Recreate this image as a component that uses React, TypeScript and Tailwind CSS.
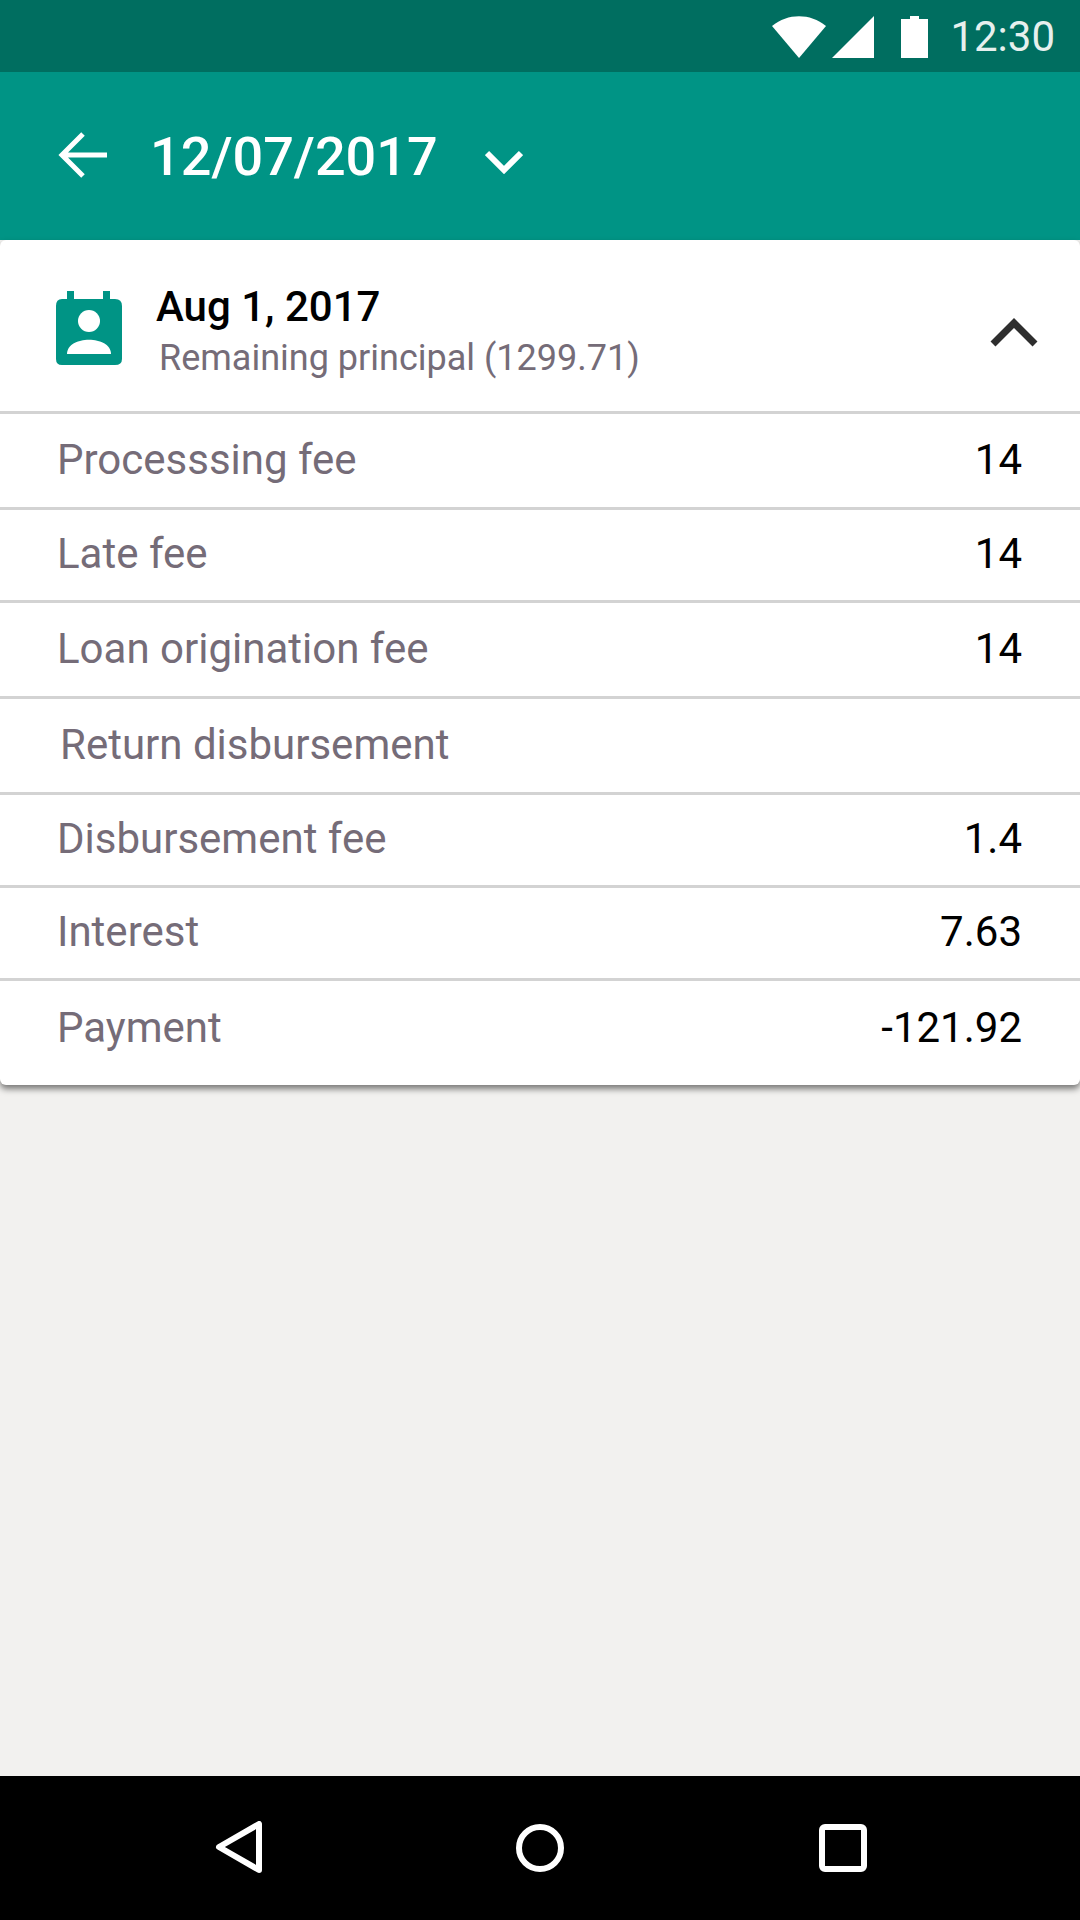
export default function App() {
  const rows: { label: string; value: string; h: string; pl: string }[] = [
    { label: "Processsing fee", value: "14", h: "h-[96px]", pl: "pl-[57px]" },
    { label: "Late fee", value: "14", h: "h-[93px]", pl: "pl-[57px]" },
    { label: "Loan origination fee", value: "14", h: "h-[96px]", pl: "pl-[57px]" },
    { label: "Return disbursement", value: "", h: "h-[96px]", pl: "pl-[60px]" },
    { label: "Disbursement fee", value: "1.4", h: "h-[93px]", pl: "pl-[57px]" },
    { label: "Interest", value: "7.63", h: "h-[93px]", pl: "pl-[57px]" },
  ];
  return (
    <div className="flex h-[1920px] w-[1080px] flex-col bg-[#f2f1ef] font-['Roboto',sans-serif]">
      <div className="flex h-[72px] items-center justify-end bg-[#006e60] pr-[25px]">
        <svg width="54" height="42" viewBox="0 0 54 42" className="mt-[1px]">
          <path d="M0 10 C16 -3 38 -3 54 10 L27 42 Z" fill="#fff" />
        </svg>
        <svg width="42" height="42" viewBox="0 0 42 42" className="ml-[6px] mt-[1px]">
          <path d="M0 42 L42 0 V42 Z" fill="#fff" />
        </svg>
        <svg width="27" height="42" viewBox="0 0 27 42" className="ml-[27px] mt-[1px]">
          <path d="M0 3 H9 V0 H18 V3 H27 V42 H0 Z" fill="#fff" />
        </svg>
        <span className="ml-[22px] mt-[2px] text-[42px] leading-none text-[#e6f0ee]">12:30</span>
      </div>
      <div className="flex h-[168px] items-center bg-[#009485] pl-[58px]">
        <svg width="50" height="48" viewBox="0 0 50 48" fill="none" stroke="#fff" strokeWidth="5" className="mb-[2px]">
          <path d="M49 24 H4 M25 3 L4 24 L25 45" />
        </svg>
        <span className="ml-[42px] mt-[2px] text-[54px] font-medium leading-none text-white">12/07/2017</span>
        <svg width="38" height="24" viewBox="0 0 38 24" fill="none" stroke="#fff" strokeWidth="6" className="ml-[47px] mt-[12px]">
          <path d="M2 3 L19 20 L36 3" />
        </svg>
      </div>
      <div className="flex h-[845px] flex-col rounded-[6px] bg-white shadow-[0_4px_6px_rgba(0,0,0,0.5)]">
        <div className="flex h-[171px] shrink-0 items-center">
          <svg width="68" height="76" viewBox="0 0 68 76" className="ml-[55px] mt-[6px]">
            <path d="M12 0 H19 V8 H48 V0 H55 V8 H60 Q67 8 67 15 V68 Q67 74 60 74 H7 Q1 74 1 68 V15 Q1 8 7 8 H12 Z" fill="#009485" />
            <circle cx="34" cy="30" r="11" fill="#fff" />
            <path d="M12 63 C12 44 56 44 56 63 Z" fill="#fff" />
          </svg>
          <div className="ml-[33px] flex flex-col pt-[13px]">
            <span className="text-[42px] font-medium leading-[46px] text-black">Aug 1, 2017</span>
            <span className="ml-[3px] mt-[5px] text-[36px] leading-[46px] text-[#756c78]">Remaining principal (1299.71)</span>
          </div>
          <svg width="48" height="30" viewBox="0 0 48 30" fill="none" stroke="#2e2e2e" strokeWidth="7" className="ml-auto mr-[42px] mt-[12px]">
            <path d="M3 27 L24 6 L45 27" />
          </svg>
        </div>
        {rows.map((r) => (
          <div key={r.label} className={`flex shrink-0 items-center justify-between border-t-[3px] border-[#d3d3d3] pb-[3px] pr-[58px] ${r.h} ${r.pl}`}>
            <span className="text-[42px] text-[#756c78]">{r.label}</span>
            <span className="text-[42px] text-black">{r.value}</span>
          </div>
        ))}
        <div className="flex flex-1 items-center justify-between border-t-[3px] border-[#d3d3d3] pb-[12px] pl-[57px] pr-[58px]">
          <span className="text-[42px] text-[#756c78]">Payment</span>
          <span className="text-[42px] text-black">-121.92</span>
        </div>
      </div>
      <div className="flex-1" />
      <div className="relative flex h-[144px] items-center bg-black">
        <svg width="48" height="54" viewBox="0 0 48 54" fill="none" stroke="#fff" strokeWidth="6" strokeLinejoin="round" className="ml-[215px]">
          <path d="M44 3 V49 L4 26 Z" />
        </svg>
        <svg width="48" height="48" viewBox="0 0 48 48" fill="none" stroke="#fff" strokeWidth="6" className="ml-[253px]">
          <circle cx="24" cy="24" r="21" />
        </svg>
        <svg width="48" height="48" viewBox="0 0 48 48" fill="none" stroke="#fff" strokeWidth="6" className="ml-[255px]">
          <rect x="3" y="3" width="42" height="42" rx="3" />
        </svg>
      </div>
    </div>
  );
}
